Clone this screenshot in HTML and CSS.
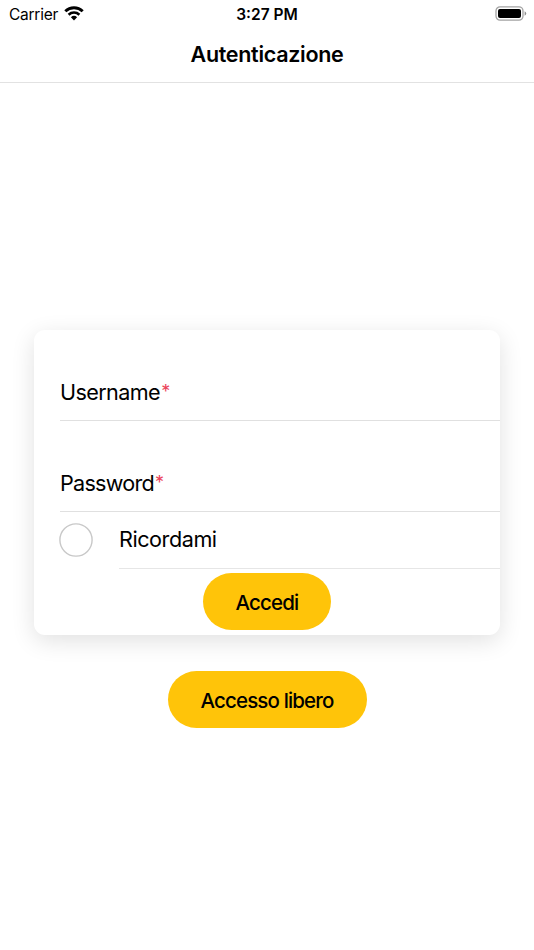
FILE: index.html
```html
<!DOCTYPE html>
<html lang="it">
<head>
    <meta charset="UTF-8">
    <meta name="viewport" content="width=device-width, initial-scale=1.0">
    <title>Autenticazione</title>
    <link rel="stylesheet" href="styles.css">
</head>
<body>
    <div class="status-bar">
        <div class="status-left">
            <span class="carrier">Carrier</span>
            <svg class="wifi" width="20" height="15" viewBox="0 0 20 15">
                <path d="M1.3 5.2 A12.6 12.6 0 0 1 18.7 5.2" fill="none" stroke="#000" stroke-width="2.9"/>
                <path d="M4.6 8.7 A7.9 7.9 0 0 1 15.4 8.7" fill="none" stroke="#000" stroke-width="2.6"/>
                <path d="M10 14.4 L6.9 11.3 A4.5 4.5 0 0 1 13.1 11.3 Z"/>
            </svg>
        </div>
        <span class="time">3:27 PM</span>
        <div class="status-right">
            <svg width="32" height="15" viewBox="0 0 32 15">
                <rect x="1" y=".9" width="27" height="13.2" rx="4" fill="none" stroke="#a3a3a3" stroke-width="1.3"/>
                <rect x="3" y="2.9" width="23" height="9.2" rx="2"/>
                <path d="M29.6 5.2 Q31.2 5.9 31.2 7.5 Q31.2 9.1 29.6 9.8 Z" fill="#8e8e8e"/>
            </svg>
        </div>
    </div>

    <header class="toolbar">
        <h1>Autenticazione</h1>
    </header>

    <main class="content">
        <form class="card">
            <label class="field"><span>Username</span><span class="required">*</span></label>
            <label class="field password"><span>Password</span><span class="required">*</span></label>
            <div class="remember">
                <svg class="checkbox" width="34" height="34" viewBox="0 0 34 34">
                    <circle cx="17" cy="17" r="16.1" fill="none" stroke="#c8c8c8" stroke-width="1.4"/>
                </svg>
                <label class="remember-label"><span>Ricordami</span></label>
            </div>
            <button type="button" class="btn login">Accedi</button>
        </form>
        <button type="button" class="btn guest">Accesso libero</button>
    </main>
</body>
</html>
```
FILE: styles.css
```css
* {
    box-sizing: border-box;
}
body {
    margin: 0;
    height: 950px;
    overflow: hidden;
    background: #fff;
    color: #000;
    font-family: Inter, 'Liberation Sans', sans-serif;
}
.status-bar {
    display: grid;
    grid-template-columns: 1fr auto 1fr;
    align-items: center;
    height: 28px;
    padding: 0 7px 0 9px;
    font-size: 15.5px;
}
.status-left {
    display: flex;
    align-items: center;
    gap: 6px;
}
.carrier {
    letter-spacing: -0.25px;
}
.wifi {
    margin-top: -2px;
}
.time {
    margin-right: 2px;
    font-weight: 600;
}
.status-right {
    display: flex;
    justify-content: flex-end;
    margin-top: -1px;
}
.toolbar {
    display: flex;
    align-items: center;
    justify-content: center;
    height: 55px;
    padding-bottom: 2px;
    border-bottom: 1px solid #e2e2e2;
}
.toolbar h1 {
    margin: 0;
    font-size: 21.5px;
    font-weight: 600;
    letter-spacing: -0.3px;
}
.content {
    display: flex;
    flex-direction: column;
    align-items: center;
    padding: 247px 34px 0;
}
.card {
    display: flex;
    flex-direction: column;
    width: 100%;
    height: 305px;
    padding-left: 26px;
    border-radius: 11px;
    box-shadow: 0 6px 23px rgba(0, 0, 0, 0.12);
    font-size: 21.6px;
    letter-spacing: -0.6px;
}
.field {
    display: flex;
    align-items: flex-end;
    height: 91px;
    padding-bottom: 15px;
    border-bottom: 1px solid #e0e0e0;
}
.password {
    letter-spacing: -0.75px;
}
.required {
    margin-left: 1px;
    font-size: 18px;
    line-height: 26px;
    color: #eb445a;
}
.remember {
    display: flex;
    align-items: center;
    height: 57px;
}
.checkbox {
    margin: 0 26px 1px -1px;
}
.remember-label {
    display: flex;
    flex: 1;
    align-items: center;
    height: 57px;
    padding-bottom: 2px;
    border-bottom: 1px solid #e6e6e6;
    letter-spacing: -0.45px;
}
.btn {
    height: 57px;
    padding: 2px 0 0;
    border: 0;
    border-radius: 29px;
    background: #ffc409;
    color: #000;
    font-family: inherit;
    font-size: 20.5px;
    font-weight: 500;
    letter-spacing: -0.85px;
}
.login {
    align-self: center;
    width: 128px;
    margin: 4px 26px 0 0;
}
.guest {
    width: 199px;
    margin-top: 36px;
}
```
